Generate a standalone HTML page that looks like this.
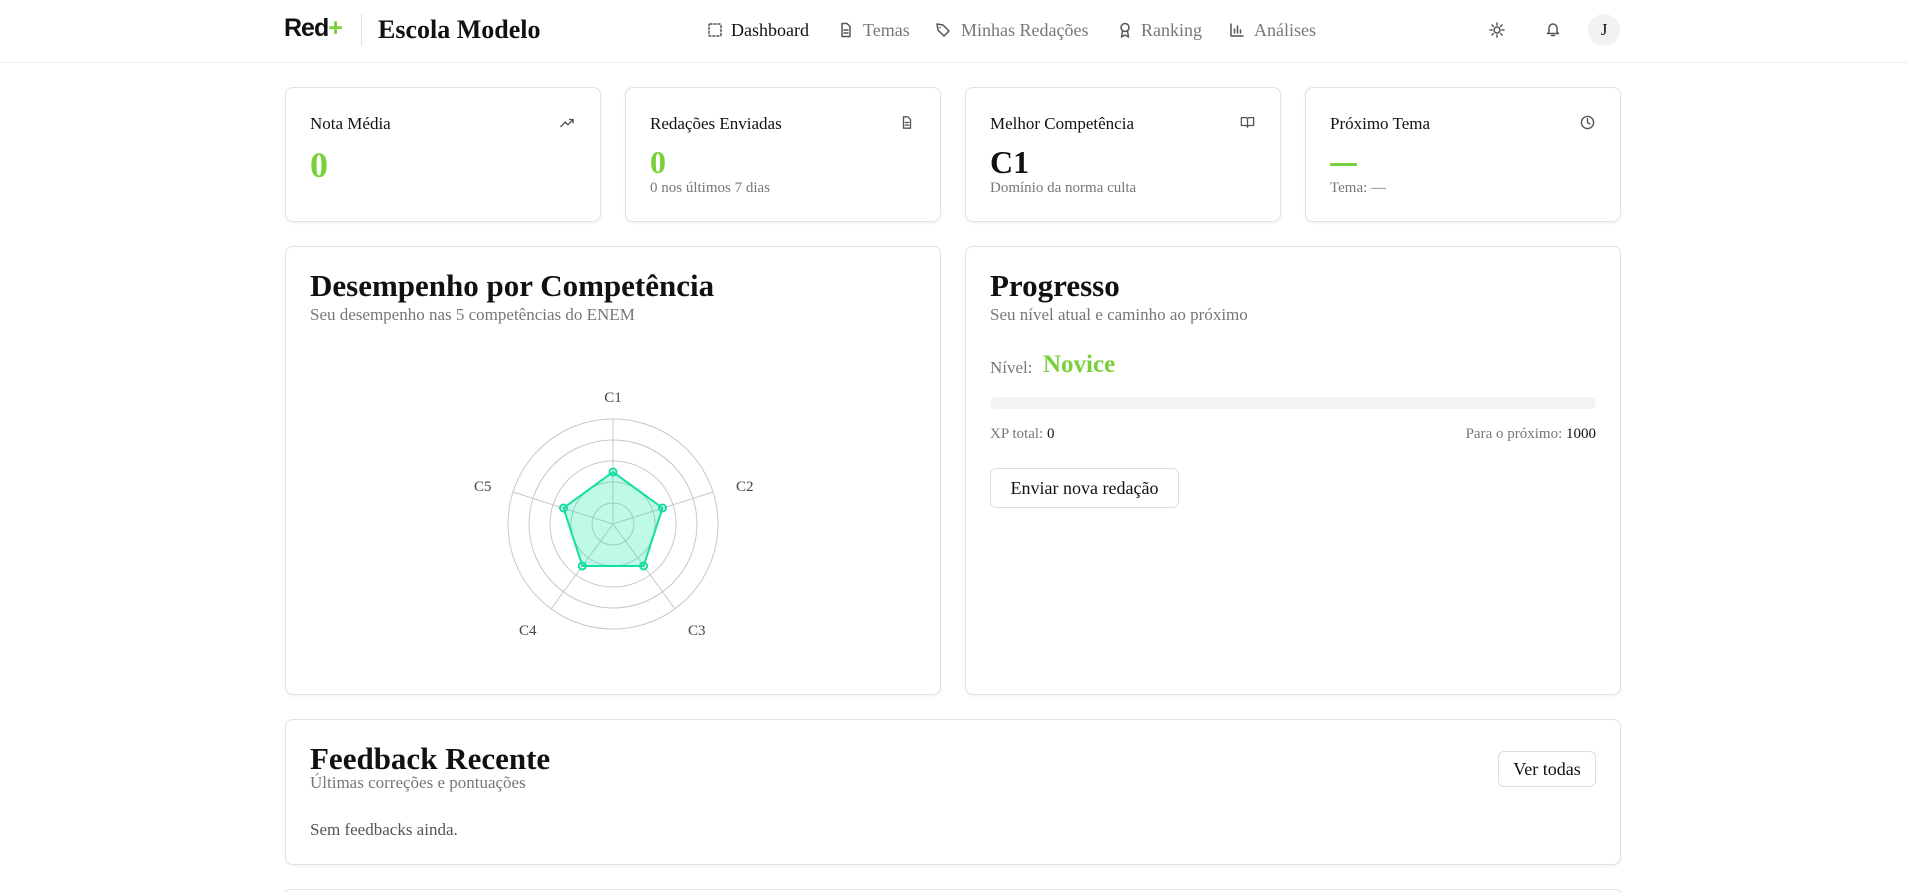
<!DOCTYPE html>
<html style="width:1907px;height:893px;overflow:hidden"><head><meta charset="utf-8"><style>
*{margin:0;padding:0;box-sizing:border-box}
body{width:1907px;height:893px;overflow:hidden;background:#fff;font-family:"Liberation Serif","DejaVu Serif",serif;color:#111;position:relative}
.a{position:absolute;white-space:nowrap}
.card{position:absolute;border:1px solid #e2e2e2;border-radius:8px;background:#fff;box-shadow:0 1px 3px rgba(0,0,0,.06)}
.g{color:#7ad03a}
.m{color:#777}
.nav{font-size:18px;color:#777;top:20px}
.ic{stroke:#555;fill:none;stroke-width:1.5;stroke-linecap:round;stroke-linejoin:round}
.btn{position:absolute;border:1px solid #ddd;border-radius:6px;background:#fff;font-size:18px;display:flex;align-items:center;justify-content:center}
</style></head><body>
<div class="a" style="left:0;top:62px;width:1907px;border-top:1px solid #eee"></div>
<div class="a" style="left:284px;top:14px;font-size:25px;font-weight:bold;font-family:'Liberation Sans',sans-serif;letter-spacing:-1px">Red<span class="g">+</span></div>
<div class="a" style="left:361px;top:14px;height:32px;border-left:1px solid #e2e2e2"></div>
<div class="a" style="left:378px;top:15px;font-size:26px;font-weight:bold">Escola Modelo</div>
<svg class="a" style="left:707px;top:22px" width="16" height="16" viewBox="0 0 16 16"><rect x="2" y="2" width="12" height="12" rx="1" class="ic" stroke="#111" stroke-dasharray="2 2"/></svg>
<div class="a nav" style="left:731px;color:#111">Dashboard</div>
<svg class="a" style="left:838px;top:22px" width="16" height="16" viewBox="0 0 16 16"><path class="ic" d="M4 1.5h5l3 3v10H4z M6 8h4 M6 11h4"/></svg>
<div class="a nav" style="left:863px">Temas</div>
<svg class="a" style="left:935px;top:22px" width="16" height="16" viewBox="0 0 16 16"><path class="ic" d="M2 2l6 1 6 6-5 5-6-6z M5 5.5h.1"/></svg>
<div class="a nav" style="left:961px">Minhas Redações</div>
<svg class="a" style="left:1117px;top:22px" width="16" height="16" viewBox="0 0 16 16"><circle class="ic" cx="8" cy="5.5" r="4"/><path class="ic" d="M5.5 9l-1 6 3.5-2 3.5 2-1-6"/></svg>
<div class="a nav" style="left:1141px">Ranking</div>
<svg class="a" style="left:1229px;top:22px" width="16" height="16" viewBox="0 0 16 16"><path class="ic" d="M2 2v12h12 M5.5 11V7 M8.5 11V4 M11.5 11V8"/></svg>
<div class="a nav" style="left:1254px">Análises</div>
<svg class="a" style="left:1489px;top:22px" width="16" height="16" viewBox="0 0 16 16"><circle class="ic" stroke="#111" cx="8" cy="8" r="3"/><path class="ic" stroke="#111" d="M8 1v2M8 13v2M1 8h2M13 8h2M3 3l1.4 1.4M11.6 11.6L13 13M3 13l1.4-1.4M11.6 4.4L13 3"/></svg>
<svg class="a" style="left:1545px;top:21px" width="16" height="16" viewBox="0 0 16 16"><path class="ic" stroke="#111" d="M4 11V7a4 4 0 018 0v4l1.5 1.5h-11z M6.5 14.5h3"/></svg>
<div class="a" style="left:1588px;top:14px;width:32px;height:32px;border-radius:50%;background:#f2f2f2;font-size:17px;display:flex;align-items:center;justify-content:center">J</div>

<div class="card" style="left:285px;top:87px;width:316px;height:135px"></div>
<div class="card" style="left:625px;top:87px;width:316px;height:135px"></div>
<div class="card" style="left:965px;top:87px;width:316px;height:135px"></div>
<div class="card" style="left:1305px;top:87px;width:316px;height:135px"></div>
<div class="a" style="left:310px;top:114px;font-size:17px">Nota Média</div>
<svg class="a" style="left:560px;top:116px" width="14" height="14" viewBox="0 0 16 16"><path class="ic" d="M1 12l5-5 3 3 6-6 M11 4h4v4"/></svg>
<div class="a g" style="left:310px;top:144px;font-size:36px;font-weight:bold">0</div>
<div class="a" style="left:650px;top:114px;font-size:17px">Redações Enviadas</div>
<svg class="a" style="left:900px;top:115px" width="14" height="15" viewBox="0 0 16 16"><path class="ic" d="M4 1.5h5l3 3v10H4z M6 8h4 M6 11h4"/></svg>
<div class="a g" style="left:650px;top:144px;font-size:32px;font-weight:bold">0</div>
<div class="a m" style="left:650px;top:180px;font-size:15px">0 nos últimos 7 dias</div>
<div class="a" style="left:990px;top:114px;font-size:17px">Melhor Competência</div>
<svg class="a" style="left:1240px;top:115px" width="15" height="14" viewBox="0 0 16 16"><path class="ic" d="M1 3h5a2 2 0 012 2v9a2 2 0 00-2-2H1z M15 3h-5a2 2 0 00-2 2v9a2 2 0 012-2h5z"/></svg>
<div class="a" style="left:990px;top:144px;font-size:32px;font-weight:bold">C1</div>
<div class="a m" style="left:990px;top:180px;font-size:15px">Domínio da norma culta</div>
<div class="a" style="left:1330px;top:114px;font-size:17px">Próximo Tema</div>
<svg class="a" style="left:1580px;top:115px" width="15" height="15" viewBox="0 0 16 16"><circle class="ic" cx="8" cy="8" r="6.5"/><path class="ic" d="M8 4v4l2.5 1.5"/></svg>
<div class="a" style="left:1330px;top:163px;width:27px;height:3px;background:#7ad03a"></div>
<div class="a m" style="left:1330px;top:180px;font-size:15px">Tema: —</div>

<div class="card" style="left:285px;top:246px;width:656px;height:449px"></div>
<div class="a" style="left:310px;top:268px;font-size:31px;font-weight:bold">Desempenho por Competência</div>
<div class="a m" style="left:310px;top:305px;font-size:17px">Seu desempenho nas 5 competências do ENEM</div>
<svg class="a" style="left:463px;top:380px" width="300" height="270" viewBox="463 380 300 270" font-family="Liberation Serif,serif" font-size="15" fill="#444">
<g fill="none" stroke="#c8c8c8" stroke-width="1">
<circle cx="613" cy="524" r="21"/><circle cx="613" cy="524" r="42"/><circle cx="613" cy="524" r="63"/><circle cx="613" cy="524" r="84"/><circle cx="613" cy="524" r="105"/>
<path d="M613 524V419 M613 524L713 492 M613 524L675 609 M613 524L551 609 M613 524L513 492"/>
</g>
<polygon points="613,472 662.5,508 643.6,566 582.4,566 563.5,508" fill="rgba(0,230,160,.25)" stroke="#12e0a0" stroke-width="2"/>
<g fill="none" stroke="#12e0a0" stroke-width="2"><circle cx="613" cy="472" r="3.5"/><circle cx="662.5" cy="508" r="3.5"/><circle cx="643.6" cy="566" r="3.5"/><circle cx="582.4" cy="566" r="3.5"/><circle cx="563.5" cy="508" r="3.5"/></g>
<text x="613" y="402" text-anchor="middle">C1</text>
<text x="736" y="491">C2</text>
<text x="688" y="635">C3</text>
<text x="519" y="635">C4</text>
<text x="474" y="491">C5</text>
</svg>

<div class="card" style="left:965px;top:246px;width:656px;height:449px"></div>
<div class="a" style="left:990px;top:268px;font-size:31px;font-weight:bold">Progresso</div>
<div class="a m" style="left:990px;top:305px;font-size:17px">Seu nível atual e caminho ao próximo</div>
<div class="a m" style="left:990px;top:358px;font-size:17px">Nível:</div>
<div class="a g" style="left:1043px;top:351px;font-size:25px;font-weight:bold">Novice</div>
<div class="a" style="left:990px;top:397px;width:606px;height:12px;border-radius:6px;background:#f3f3f3"></div>
<div class="a m" style="left:990px;top:426px;font-size:15px">XP total: <span style="color:#111">0</span></div>
<div class="a m" style="right:311px;top:426px;font-size:15px">Para o próximo: <span style="color:#111">1000</span></div>
<div class="btn" style="left:990px;top:468px;width:189px;height:40px">Enviar nova redação</div>

<div class="card" style="left:285px;top:719px;width:1336px;height:146px"></div>
<div class="a" style="left:310px;top:741px;font-size:31px;font-weight:bold">Feedback Recente</div>
<div class="a m" style="left:310px;top:773px;font-size:17px">Últimas correções e pontuações</div>
<div class="btn" style="left:1498px;top:751px;width:98px;height:36px">Ver todas</div>
<div class="a" style="left:310px;top:820px;font-size:17px;color:#555">Sem feedbacks ainda.</div>
<div class="a" style="left:285px;top:889px;width:1336px;height:4px;border:1px solid #e2e2e2;border-bottom:none;border-radius:8px 8px 0 0"></div>
</body></html>
